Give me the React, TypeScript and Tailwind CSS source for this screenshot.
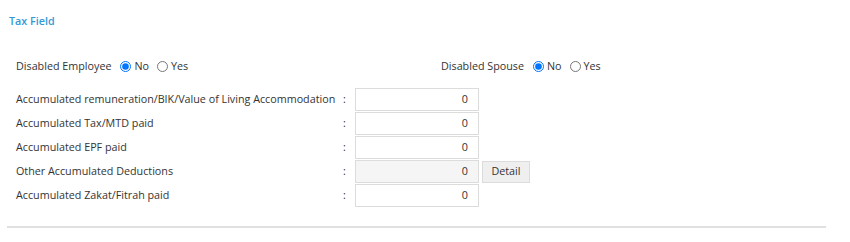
const rows = [
  { label: "Accumulated remuneration/BIK/Value of Living Accommodation", value: "0" },
  { label: "Accumulated Tax/MTD paid", value: "0" },
  { label: "Accumulated EPF paid", value: "0" },
  { label: "Other Accumulated Deductions", value: "0", readOnly: true, detail: true },
  { label: "Accumulated Zakat/Fitrah paid", value: "0" },
];

function YesNo({ title }: { title: string }) {
  return (
    <div className="flex items-center">
      <span className="mr-[9px]">{title}</span>
      <input type="radio" defaultChecked name={title} className="m-0 h-[11px] w-[11px]" />
      <span className="ml-[3px] mr-[8px]">No</span>
      <input type="radio" name={title} className="m-0 h-[11px] w-[11px]" />
      <span className="ml-[3px]">Yes</span>
    </div>
  );
}

export default function App() {
  return (
    <div className="h-[242px] w-[850px] bg-white text-[10.75px] text-[#333] [font-family:'Open_Sans',sans-serif]">
      <div className="px-[7px]">
        <div className="pl-[2px] pt-[14px] text-[10.75px] font-semibold leading-[15px] text-[#3399d6]">
          Tax Field
        </div>

        <div className="mt-[29px] flex h-[16px] items-center pl-[9px]">
          <div className="w-[425px]">
            <YesNo title="Disabled Employee" />
          </div>
          <YesNo title="Disabled Spouse" />
        </div>

        <div className="mt-[14px] flex flex-col gap-[1px] pl-[9px]">
          {rows.map((r) => (
            <div key={r.label} className="flex h-[23px] items-center">
              <span className="w-[327px] whitespace-nowrap">{r.label}</span>
              <span className="w-[12px]">:</span>
              <div
                className={
                  "flex h-[23px] w-[124px] items-center justify-end border border-[#dcdcdc] pr-[10px] " +
                  (r.readOnly ? "bg-[#f5f5f5]" : "bg-white")
                }
              >
                {r.value}
              </div>
              {r.detail && (
                <button className="ml-[3px] h-[22px] w-[48px] border border-[#dcdcdc] bg-[#efefef] text-[10.75px] text-[#333]">
                  Detail
                </button>
              )}
            </div>
          ))}
        </div>

        <div className="mt-[19px] h-[2px] w-[819px] bg-[#e0e0e0]" />
      </div>
    </div>
  );
}
